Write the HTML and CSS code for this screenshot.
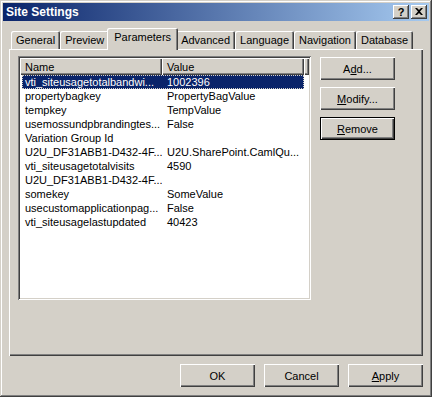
FILE: index.html
```html
<!DOCTYPE html>
<html lang="en">
<head>
    <meta charset="UTF-8">
    <title>Site Settings</title>
    <link rel="stylesheet" href="styles.css">
</head>
<body>

<div class="window">
    <div class="titlebar">
        <span class="title">Site Settings</span>
        <button class="caption-btn help">?</button>
        <button class="caption-btn">
            <svg width="8" height="7" viewBox="0 0 8 7"><path d="M0 0h2l2 2 2-2h2L5 3.5 8 7H6L4 5 2 7H0l3-3.5z" fill="#000"/></svg>
        </button>
    </div>

    <div class="client">
        <div class="tabs">
            <div class="tab">General</div>
            <div class="tab">Preview</div>
            <div class="tab active">Parameters</div>
            <div class="tab">Advanced</div>
            <div class="tab">Language</div>
            <div class="tab">Navigation</div>
            <div class="tab">Database</div>
        </div>

        <div class="panel">
            <div class="listview">
                <div class="lv-header">
                    <div class="lv-col">Name</div>
                    <div class="lv-col">Value</div>
                    <div class="lv-filler"></div>
                </div>
                <div class="lv-row selected"><span class="c1">vti_siteusagetotalbandwi...</span><span class="c2">1002396</span></div>
                <div class="lv-row"><span class="c1">propertybagkey</span><span class="c2">PropertyBagValue</span></div>
                <div class="lv-row"><span class="c1">tempkey</span><span class="c2">TempValue</span></div>
                <div class="lv-row"><span class="c1">usemossundpbrandingtes...</span><span class="c2">False</span></div>
                <div class="lv-row"><span class="c1">Variation Group Id</span><span class="c2"></span></div>
                <div class="lv-row"><span class="c1">U2U_DF31ABB1-D432-4F...</span><span class="c2">U2U.SharePoint.CamlQu...</span></div>
                <div class="lv-row"><span class="c1">vti_siteusagetotalvisits</span><span class="c2">4590</span></div>
                <div class="lv-row"><span class="c1">U2U_DF31ABB1-D432-4F...</span><span class="c2"></span></div>
                <div class="lv-row"><span class="c1">somekey</span><span class="c2">SomeValue</span></div>
                <div class="lv-row"><span class="c1">usecustomapplicationpag...</span><span class="c2">False</span></div>
                <div class="lv-row"><span class="c1">vti_siteusagelastupdated</span><span class="c2">40423</span></div>
            </div>

            <div class="side-buttons">
                <button class="btn">A<u>d</u>d...</button>
                <button class="btn"><u>M</u>odify...</button>
                <button class="btn default"><u>R</u>emove</button>
            </div>
        </div>

        <div class="footer">
            <button class="btn">OK</button>
            <button class="btn">Cancel</button>
            <button class="btn"><u>A</u>pply</button>
        </div>
    </div>
</div>

</body>
</html>
```

FILE: styles.css
```css
body {
    margin: 0;
    background-color: #d4d0c8;
    font-family: "Liberation Sans", Tahoma, sans-serif;
    font-size: 11px;
    color: #000;
}
.window {
    width: 432px;
    height: 397px;
    box-sizing: border-box;
    padding: 3px;
    background-color: #d4d0c8;
    box-shadow: inset -1px -1px #404040, inset 1px 1px #d4d0c8, inset -2px -2px #808080, inset 2px 2px #fff;
    display: flex;
    flex-direction: column;
}
.titlebar {
    height: 18px;
    flex-shrink: 0;
    background: linear-gradient(to right, #0a246a, #a6caf0);
    display: flex;
    align-items: center;
    padding: 0 2px 0 3px;
    color: #fff;
    font-weight: bold;
}
.title {
    flex: 1;
    font-size: 12px;
}
.caption-btn {
    width: 16px;
    height: 14px;
    margin-left: 2px;
    padding: 0;
    border: none;
    background-color: #d4d0c8;
    box-shadow: inset -1px -1px #404040, inset 1px 1px #fff, inset -2px -2px #808080;
    display: flex;
    align-items: center;
    justify-content: center;
    font-family: "Liberation Sans", sans-serif;
    font-weight: bold;
    font-size: 11px;
    color: #000;
}
.caption-btn svg {
    margin-top: -1px;
}
.client {
    flex: 1;
    padding: 0 6px;
    display: flex;
    flex-direction: column;
}
.tabs {
    height: 21px;
    margin-top: 7px;
    padding-left: 2px;
    display: flex;
    align-items: flex-end;
}
.tab {
    height: 18px;
    box-sizing: border-box;
    padding: 3px 5px 0;
    border-radius: 2px 2px 0 0;
    box-shadow: inset 1px 1px #fff, inset -1px 0 #404040, inset -2px 0 #808080;
    white-space: nowrap;
}
.tab.active {
    height: 22px;
    margin: 0 -2px -1px;
    padding: 3px 7px 0;
    position: relative;
    z-index: 1;
    background-color: #d4d0c8;
}
.panel {
    height: 307px;
    box-sizing: border-box;
    padding: 7px 0 0 9px;
    box-shadow: inset 1px 1px #fff, inset -1px -1px #404040, inset -2px -2px #808080;
    display: flex;
    gap: 9px;
}
.listview {
    width: 293px;
    height: 244px;
    box-sizing: border-box;
    padding: 2px;
    background-color: #fff;
    box-shadow: inset 1px 1px #808080, inset -1px -1px #fff, inset 2px 2px #404040, inset -2px -2px #d4d0c8;
}
.lv-header {
    display: flex;
    height: 17px;
}
.lv-col, .lv-filler {
    box-sizing: border-box;
    background-color: #d4d0c8;
    box-shadow: inset 1px 1px #fff, inset -1px -1px #404040, inset -2px -2px #808080;
    line-height: 18px;
}
.lv-col {
    width: 142px;
    padding-left: 5px;
}
.lv-filler {
    flex: 1;
}
.lv-row {
    display: flex;
    width: 282px;
    height: 14px;
    line-height: 15px;
    margin-left: 2px;
    white-space: nowrap;
}
.lv-row .c1 {
    width: 140px;
    padding-left: 3px;
    box-sizing: border-box;
    overflow: hidden;
}
.lv-row .c2 {
    width: 142px;
    padding-left: 5px;
    box-sizing: border-box;
    overflow: hidden;
}
.lv-row.selected {
    background-color: #0a246a;
    color: #fff;
    outline: 1px dotted #d4d0c8;
    outline-offset: -1px;
}
.side-buttons {
    display: flex;
    flex-direction: column;
    gap: 7px;
    margin-top: 1px;
}
.btn {
    width: 75px;
    height: 23px;
    padding: 0;
    border: none;
    background-color: #d4d0c8;
    box-shadow: inset 1px 1px #fff, inset -1px -1px #404040, inset -2px -2px #808080;
    font: inherit;
    color: #000;
}
.btn.default {
    box-shadow: inset 0 0 0 1px #000, inset 2px 2px #fff, inset -2px -2px #404040, inset -3px -3px #808080;
}
.footer {
    display: flex;
    justify-content: flex-end;
    gap: 9px;
    padding-top: 8px;
}
```
